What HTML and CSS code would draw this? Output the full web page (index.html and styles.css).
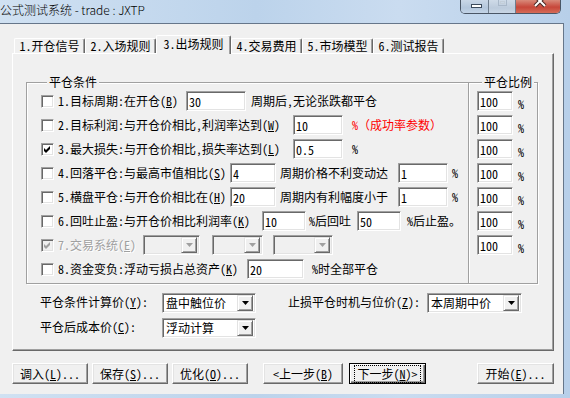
FILE: index.html
```html
<!DOCTYPE html>
<html lang="zh-CN">
<head>
    <meta charset="UTF-8">
    <meta name="viewport" content="width=device-width, initial-scale=1.0">
    <title>公式测试系统</title>
    <link rel="stylesheet" href="styles.css">
</head>
<body>

<div class="window">
    <!-- Title bar -->
    <div class="titlebar">
        <div class="title">公式测试系统 - trade : JXTP</div>
        <div class="caption-buttons">
            <span class="cap-btn cap-min">
                <svg width="28" height="14" viewBox="0 0 28 14"><rect x="10.5" y="4.5" width="10" height="3" fill="#fff" stroke="#3b4a5c"/></svg>
            </span>
            <span class="cap-btn cap-max">
                <svg width="27" height="14" viewBox="0 0 27 14"><rect x="9.5" y="-1.5" width="8" height="7" fill="none" stroke="#a9b8c9"/><rect x="11.5" y="1.5" width="4" height="2" fill="none" stroke="#c3ced9"/></svg>
            </span>
            <span class="cap-btn cap-close">
                <svg width="44" height="14" viewBox="0 0 44 14"><path d="M19 -4 L29 6 M29 -4 L19 6" stroke="#4a2a26" stroke-width="4"/><path d="M19 -4 L29 6 M29 -4 L19 6" stroke="#fff" stroke-width="2"/></svg>
            </span>
        </div>
    </div>

    <div class="client">
        <!-- Tabs -->
        <div class="tabs">
            <div class="tab">1.开仓信号</div>
            <div class="tab">2.入场规则</div>
            <div class="tab active">3.出场规则</div>
            <div class="tab">4.交易费用</div>
            <div class="tab">5.市场模型</div>
            <div class="tab">6.测试报告</div>
        </div>

        <div class="tab-panel">
            <div class="groups">
                <fieldset class="group group-main">
                    <legend>平仓条件</legend>
                    <div class="rows">
                        <div class="row">
                            <span class="check"></span>
                            <span class="label">1.目标周期:在开仓(<u>B</u>)</span>
                            <input class="edit ml8 w60" type="text" value="30">
                            <span class="ml5">周期后,无论张跌都平仓</span>
                        </div>
                        <div class="row">
                            <span class="check"></span>
                            <span class="label">2.目标利润:与开仓价相比,利润率达到(<u>W</u>)</span>
                            <input class="edit ml13 w50" type="text" value="10">
                            <span class="ml9 red">%（成功率参数）</span>
                        </div>
                        <div class="row">
                            <span class="check checked">
                                <svg width="9" height="9" viewBox="0 0 9 9"><polygon points="1,3 3,5 7,1 7,4 3,8 1,6" fill="#000"/></svg>
                            </span>
                            <span class="label">3.最大损失:与开仓价相比,损失率达到(<u>L</u>)</span>
                            <input class="edit ml13 w50" type="text" value="0.5">
                            <span class="ml9">%</span>
                        </div>
                        <div class="row">
                            <span class="check"></span>
                            <span class="label">4.回落平仓:与最高市值相比(<u>S</u>)</span>
                            <input class="edit ml4 w46" type="text" value="4">
                            <span class="ml4">周期价格不利变动达</span>
                            <input class="edit ml10 w50" type="text" value="1">
                            <span class="ml4">%</span>
                        </div>
                        <div class="row">
                            <span class="check"></span>
                            <span class="label">5.横盘平仓:与开仓价相比在(<u>H</u>)</span>
                            <input class="edit ml4 w46" type="text" value="20">
                            <span class="ml4">周期内有利幅度小于</span>
                            <input class="edit ml10 w50" type="text" value="1">
                            <span class="ml4">%</span>
                        </div>
                        <div class="row">
                            <span class="check"></span>
                            <span class="label">6.回吐止盈:与开仓价相比利润率(<u>K</u>)</span>
                            <input class="edit ml12 w44" type="text" value="10">
                            <span class="ml3">%后回吐</span>
                            <input class="edit ml6 w44" type="text" value="50">
                            <span class="ml6">%后止盈。</span>
                        </div>
                        <div class="row disabled">
                            <span class="check checked">
                                <svg width="9" height="9" viewBox="0 0 9 9"><polygon points="1,3 3,5 7,1 7,4 3,8 1,6" fill="#a0a0a0"/></svg>
                            </span>
                            <span class="label">7.交易系统(<u>E</u>)</span>
                            <div class="combo ml7 w57">
                                <span class="combo-text"></span>
                                <span class="combo-btn"><svg width="7" height="4" viewBox="0 0 7 4"><polygon points="0,0 7,0 3.5,4" fill="#a0a0a0"/></svg></span>
                            </div>
                            <div class="combo ml12 w51">
                                <span class="combo-text"></span>
                                <span class="combo-btn"><svg width="7" height="4" viewBox="0 0 7 4"><polygon points="0,0 7,0 3.5,4" fill="#a0a0a0"/></svg></span>
                            </div>
                            <div class="combo ml10 w60">
                                <span class="combo-text"></span>
                                <span class="combo-btn"><svg width="7" height="4" viewBox="0 0 7 4"><polygon points="0,0 7,0 3.5,4" fill="#a0a0a0"/></svg></span>
                            </div>
                        </div>
                        <div class="row">
                            <span class="check"></span>
                            <span class="label">8.资金变负:浮动亏损占总资产(<u>K</u>)</span>
                            <input class="edit ml9 w57" type="text" value="20">
                            <span class="ml8">%时全部平仓</span>
                        </div>
                    </div>
                </fieldset>

                <fieldset class="group group-ratio">
                    <legend>平仓比例</legend>
                    <div class="rows">
                        <div class="row"><input class="edit w36" type="text" value="100"><span class="pct">%</span></div>
                        <div class="row"><input class="edit w36" type="text" value="100"><span class="pct">%</span></div>
                        <div class="row"><input class="edit w36" type="text" value="100"><span class="pct">%</span></div>
                        <div class="row"><input class="edit w36" type="text" value="100"><span class="pct">%</span></div>
                        <div class="row"><input class="edit w36" type="text" value="100"><span class="pct">%</span></div>
                        <div class="row"><input class="edit w36" type="text" value="100"><span class="pct">%</span></div>
                        <div class="row"><input class="edit w36" type="text" value="100"><span class="pct">%</span></div>
                    </div>
                </fieldset>
            </div>

            <!-- Price settings -->
            <div class="settings">
                <div class="setting-row">
                    <span class="setting-label">平仓条件计算价(<u>Y</u>):</span>
                    <div class="combo w94">
                        <span class="combo-text">盘中触位价</span>
                        <span class="combo-btn"><svg width="7" height="4" viewBox="0 0 7 4"><polygon points="0,0 7,0 3.5,4" fill="#000"/></svg></span>
                    </div>
                    <span class="setting-label stop-label">止损平仓时机与位价(<u>Z</u>):</span>
                    <div class="combo w95">
                        <span class="combo-text">本周期中价</span>
                        <span class="combo-btn"><svg width="7" height="4" viewBox="0 0 7 4"><polygon points="0,0 7,0 3.5,4" fill="#000"/></svg></span>
                    </div>
                </div>
                <div class="setting-row">
                    <span class="setting-label">平仓后成本价(<u>C</u>):</span>
                    <div class="combo w94">
                        <span class="combo-text">浮动计算</span>
                        <span class="combo-btn"><svg width="7" height="4" viewBox="0 0 7 4"><polygon points="0,0 7,0 3.5,4" fill="#000"/></svg></span>
                    </div>
                </div>
            </div>
        </div>

        <!-- Dialog buttons -->
        <div class="buttons">
            <button class="btn w76">调入(<u>L</u>)...</button>
            <button class="btn w76 ml4">保存(<u>S</u>)...</button>
            <button class="btn w76 ml4">优化(<u>O</u>)...</button>
            <button class="btn w80 ml15">&lt;上一步(<u>B</u>)</button>
            <button class="btn btn-default w77 ml6"><span class="focus">下一步(<u>N</u>)&gt;</span></button>
            <button class="btn w77 ml51">开始(<u>E</u>)...</button>
        </div>
    </div>
</div>

</body>
</html>
```

FILE: styles.css
```css
/* System colours */
:root {
    --face: #f0f0f0;
    --shadow: #a0a0a0;
    --dark-shadow: #696969;
    --light: #e3e3e3;
    --highlight: #ffffff;
    --frame-line: #66768a;
}

* {
    box-sizing: border-box;
}

body {
    margin: 0;
    width: 570px;
    height: 398px;
    overflow: hidden;
    font-family: "Noto Sans Mono CJK SC", "Noto Sans CJK SC", sans-serif;
    font-size: 12px;
    font-weight: 300;
    line-height: 16px;
    color: #000;
}

u {
    text-underline-offset: 1px;
}

.window {
    height: 398px;
    display: flex;
    flex-direction: column;
    background: linear-gradient(to right, #d0e1f2, #bcd3eb 45%, #cadcf0 70%, #b7cfe9);
}

/* Title bar */
.titlebar {
    height: 23px;
    display: flex;
    align-items: flex-start;
}

.title {
    font-family: "Noto Sans CJK SC", sans-serif;
    font-size: 12px;
    line-height: 18px;
    padding-top: 1px;
    color: #000;
}

.caption-buttons {
    margin-left: auto;
    margin-right: 9px;
    display: flex;
    height: 14px;
    border: 1px solid #4a5666;
    border-top: none;
    border-radius: 0 0 5px 5px;
    overflow: hidden;
}

.cap-btn {
    display: block;
    height: 13px;
}

.cap-btn svg {
    display: block;
}

.cap-min {
    width: 28px;
    background: linear-gradient(#c9d7e7, #b3c6dc 60%, #c3d4e7);
    border-right: 1px solid #6e7d8e;
}

.cap-max {
    width: 27px;
    background: linear-gradient(#cfdbe8, #bccbdc 60%, #c9d6e5);
    border-right: 1px solid #6e7d8e;
}

.cap-close {
    width: 44px;
    background: linear-gradient(#d98a7a, #c7473a 55%, #d56b57);
}

/* Client area */
.client {
    flex: 1;
    margin-right: 6px;
    margin-bottom: 4px;
    background: var(--face);
    border-top: 1px solid var(--frame-line);
    border-right: 1px solid var(--frame-line);
    display: flex;
    flex-direction: column;
}

/* Tab strip */
.tabs {
    height: 29px;
    display: flex;
    align-items: flex-end;
    padding-left: 14px;
}

.tab {
    width: 71px;
    height: 15px;
    line-height: 14px;
    text-align: center;
    background: var(--face);
    border-top: 1px solid var(--highlight);
    border-left: 1px solid var(--highlight);
    border-right: 1px solid var(--dark-shadow);
    border-radius: 2px 2px 0 0;
    box-shadow: inset -1px 0 0 var(--shadow);
}

.tab.active {
    width: 75px;
    height: 19px;
    line-height: 16px;
    margin-bottom: -1px;
    position: relative;
    z-index: 1;
}

.tab-panel {
    margin-left: 12px;
    width: 542px;
    height: 298px;
    border-top: 1px solid var(--highlight);
    border-left: 1px solid var(--highlight);
    border-right: 1px solid var(--dark-shadow);
    border-bottom: 1px solid var(--dark-shadow);
    box-shadow: inset -1px -1px 0 var(--shadow);
}

/* Group boxes */
.groups {
    display: flex;
    margin-left: 13px;
    margin-top: 20px;
}

.group {
    margin: 0;
    padding: 0;
    min-width: 0;
    height: 210px;
    border: 1px solid var(--shadow);
    box-shadow: inset 1px 1px 0 var(--highlight), 1px 1px 0 var(--highlight);
}

.group legend {
    padding: 0 2px;
    line-height: 16px;
    background: var(--face);
}

.group-main {
    width: 442px;
    border-right: none;
    padding-left: 14px;
}

.group-main legend {
    margin-left: 6px;
}

.group-ratio {
    width: 70px;
    padding-left: 8px;
}

.group-ratio legend {
    margin-left: 5px;
}

.rows {
    margin-top: -1px;
}

.row {
    height: 24px;
    display: flex;
    align-items: center;
    white-space: nowrap;
}

.row .label {
    margin-left: 4px;
}

.red {
    color: #ff0000;
}

.pct {
    margin-left: 5px;
    margin-top: 5px;
}

.disabled .label {
    color: var(--shadow);
    text-shadow: 1px 1px 0 var(--highlight);
}

/* Check boxes */
.check {
    width: 13px;
    height: 13px;
    flex: none;
    background: #fff;
    border-top: 1px solid var(--shadow);
    border-left: 1px solid var(--shadow);
    border-right: 1px solid var(--highlight);
    border-bottom: 1px solid var(--highlight);
    box-shadow: inset 1px 1px 0 var(--dark-shadow), inset -1px -1px 0 var(--light);
    padding: 1px;
}

.check svg {
    display: block;
}

.disabled .check {
    background: var(--face);
}

/* Edit boxes */
.edit {
    height: 20px;
    margin-top: 0;
    margin-bottom: 0;
    padding: 0 2px;
    font: inherit;
    line-height: 16px;
    color: #000;
    background: #fff;
    border-top: 1px solid var(--shadow);
    border-left: 1px solid var(--shadow);
    border-right: 1px solid var(--highlight);
    border-bottom: 1px solid var(--highlight);
    box-shadow: inset 1px 1px 0 var(--dark-shadow), inset -1px -1px 0 var(--light);
    outline: none;
}

/* Combo boxes */
.combo {
    height: 20px;
    display: flex;
    align-items: center;
    padding: 2px;
    background: #fff;
    border-top: 1px solid var(--shadow);
    border-left: 1px solid var(--shadow);
    border-right: 1px solid var(--highlight);
    border-bottom: 1px solid var(--highlight);
    box-shadow: inset 1px 1px 0 var(--dark-shadow), inset -1px -1px 0 var(--light);
}

.combo-text {
    flex: 1;
    padding-left: 1px;
    line-height: 16px;
}

.combo-btn {
    width: 16px;
    height: 16px;
    display: flex;
    align-items: center;
    justify-content: center;
    background: var(--face);
    border-top: 1px solid var(--light);
    border-left: 1px solid var(--light);
    border-right: 1px solid var(--dark-shadow);
    border-bottom: 1px solid var(--dark-shadow);
    box-shadow: inset 1px 1px 0 var(--highlight), inset -1px -1px 0 var(--shadow);
}

.combo-btn svg {
    display: block;
}

.disabled .combo {
    background: var(--face);
}

/* Price settings */
.settings {
    padding-left: 27px;
    margin-top: 9px;
    display: flex;
    flex-direction: column;
    gap: 5px;
}

.setting-row {
    display: flex;
    align-items: center;
    white-space: nowrap;
}

.setting-label {
    width: 122px;
    margin-top: -3px;
}

.stop-label {
    width: 139px;
    margin-left: 32px;
}

/* Dialog buttons */
.buttons {
    display: flex;
    padding-left: 12px;
    margin-top: 12px;
}

.btn {
    height: 21px;
    padding: 0;
    font: inherit;
    line-height: 16px;
    color: #000;
    background: var(--face);
    border-top: 1px solid var(--highlight);
    border-left: 1px solid var(--highlight);
    border-right: 1px solid var(--dark-shadow);
    border-bottom: 1px solid var(--dark-shadow);
    box-shadow: inset -1px -1px 0 var(--shadow), inset 1px 1px 0 var(--light);
}

.btn-default {
    border: 1px solid #000;
    box-shadow: inset 1px 1px 0 var(--highlight), inset -1px -1px 0 var(--dark-shadow), inset -2px -2px 0 var(--shadow);
}

.btn-default .focus {
    display: inline-block;
    padding: 0 2px;
    outline: 1px dotted #000;
    outline-offset: 0;
}

/* Widths and spacing */
.w36 { width: 36px; }
.w44 { width: 44px; }
.w46 { width: 46px; }
.w50 { width: 50px; }
.w51 { width: 51px; }
.w57 { width: 57px; }
.w60 { width: 60px; }
.w76 { width: 76px; }
.w77 { width: 77px; }
.w80 { width: 80px; }
.w94 { width: 94px; }
.w95 { width: 95px; }

.ml3 { margin-left: 3px; }
.ml4 { margin-left: 4px; }
.ml5 { margin-left: 5px; }
.ml6 { margin-left: 6px; }
.ml7 { margin-left: 7px; }
.ml8 { margin-left: 8px; }
.ml9 { margin-left: 9px; }
.ml10 { margin-left: 10px; }
.ml12 { margin-left: 12px; }
.ml13 { margin-left: 13px; }
.ml15 { margin-left: 15px; }
.ml51 { margin-left: 51px; }
```
